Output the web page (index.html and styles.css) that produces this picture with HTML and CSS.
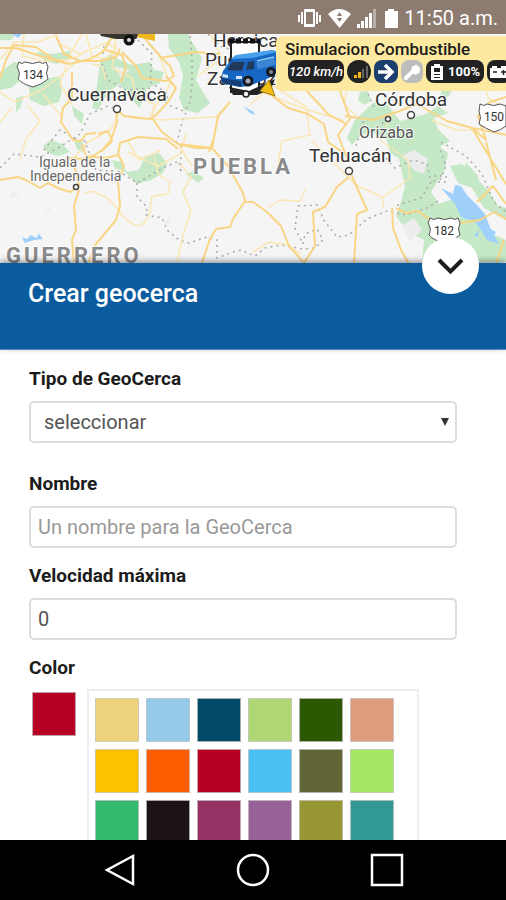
FILE: index.html
```html
<!DOCTYPE html>
<html lang="es">
<head>
<meta charset="utf-8">
<meta name="viewport" content="width=device-width, initial-scale=1">
<title>Crear geocerca</title>
<link rel="stylesheet" href="styles.css">
</head>
<body>
<header class="status">
  <svg class="status-icons" viewBox="0 0 104 24" aria-hidden="true">
    <g fill="#fff">
      <path fill-rule="evenodd" d="M8 3h9q1 0 1 1v16q0 1-1 1H8q-1 0-1-1V4q0-1 1-1zm1 3v12h7V6z"/>
      <path d="M4 6h2v12H4zM1 9h2v7H1zM19 6h2v12h-2zM22 9h2v7h-2z"/>
      <path d="M31 8Q42-2 54 8L42.500 22z"/>
      <path d="M60 18h3v4h-3zM64 15h3v7h-3zM68 11h3v11h-3zM72 7h3v15h-3z"/>
      <path d="M76 3h3v19h-3z" opacity=".4"/>
      <path d="M91 3h6v2h4v17H88V5h3z"/>
    </g>
    <path d="M40 10l2.500-4 2.500 4zM40 12h5l-2.500 4z" fill="#8d7b70"/>
  </svg>
  <time class="clock">11:50 a.m.</time>
</header>

<section class="map" aria-label="Mapa">
  <svg class="map-canvas" viewBox="0 34 506 229" preserveAspectRatio="xMinYMin slice">
    <rect y="34" width="900" height="229" fill="#f5f5f5"/>
    <g fill="#c5e8c7">
      <path d="M28 78l12 2 20-4 2 16-3 10-15 4-14-6z"/>
      <path d="M0 72l14-10 12 2-3 14-12 10-11 2z"/>
      <path d="M36 52l16 2 18-3 2 7-16 6-12-4z"/>
      <path d="M16 98l8-2-4 12-4 4z"/>
      <path d="M100 62l10-8 10 6 12 5 18-3 4 8 10 2-4 11-13 5-7 20-12-12-8-12-12 8-10 18-6-2 5-22z"/>
      <path d="M168 34h20l4 8 10 16-6 22 8 14 6 9-12 10-14-3-5-12 4-22-4-14-10-14z"/>
      <path d="M72 106l12 8-2 10-8-8z"/>
      <path d="M43 146l8-6 11 4 8 8-12 4-10-3z"/>
      <path d="M74 141l9 1v11l-6-4z"/>
      <path d="M112 160l9 2 6 10 12-2 6-14 14-3 8 10-4 10-12 7-14 4-14-14-8-1z"/>
      <path d="M186 174l8-3 10 7-6 5z"/>
      <path d="M360 92l8-1 3 10-7 4-6-5z"/>
      <path d="M374 102l14 3 12 16 26-7 12-8 10 7-14 5 4 11 12 12-10 6 8 6-4 20-14 12-14 4-10-8-2-20-14-8-4-15-14-6-12 4-8 9-5-7 8-18z"/>
      <path d="M395 140h42l4 36-10 16 8 12 14-5 6 10 14-2 8 16 14 12 11 5v22h-84l2-22-16-8-12-16 5-14 4-16z"/>
      <path d="M450 166l12-2 26 26 10 16 8 2v12l-22-12-12-20-14-5z"/>
      <path d="M466 162l12 14 2 12-16-16z"/>
      <path d="M442 87h12l-6 10-8 2z"/>
      <path d="M0 34h16l-5 6H0z"/>
    </g>
    <g fill="#ededed">
      <path d="M402 156l12-6 14 9-4 15-10-4zM163 222l8-4-3 9zM402 226l12-8 8 12-12 12zM44 218l8-15-2 8zM114 66l16 4-9 8zM12 190l8 5-10 3z"/>
    </g>
    <g fill="#9ed0fb">
      <path d="M441 188l12 6 2-9 6 1 6 9 9 9 9 10 6 16 8 14-12-4-6-10-6-8-14-5-6-13z"/>
      <path d="M22 237l5 2 4-4 5 3 3-4 4 5-9 1-9 3z"/>
      <path d="M244 107l9 4 2 4-5-2zM12 34h10l-4 4zM488 228l8 4-4 6z"/>
      <path d="M474 235l6-5-3 7z"/>
    </g>
    <g class="borders">
      <path d="M138 40l14 14-2 28 18 12-2 10 20 8-5 14-5 20M104 46l-2 18 6 16 18 10 26-2M208 34l12 12 12 4M190 36l2 22v30l-2 14-6 10M0 168l14-14 26 3 18-9 22-14 10-20 18-8 12 4M44 150l16-20 14 8 16 6M84 140l12 30 24 2 17 11 28-16 14-6 2 12v-30M137 183v14l10 10-1 8 16 3 5 12 12 10 10 3 18-6 10 3v18l16-6 8-2 14 6 10-8 16-3 22 4 12-1 8-8-6-11-12 5-2 10-8-16 3-22 20-1 5 14 14 18 12-2 18-16 20-8 20 4 22-8 12-8M386 158l9 10 18-8 14 4 4 18-10 16-26 8M441 142l25 14 16 18 12 28 12 10M368 94l6 13M356 146l8-26 16-2 12 22M434 176h12v6h-12zM440 180l6-14-6-16"/>
    </g>
    <g class="minor">
      <path d="M24 34l-2 22 22 5 28-2M0 92l14 10 28-12 22-17 10-10M28 106l12 15-14 18-6 20M43 94l20 24M60 44l20 10 28-12M82 34l-12 20-10 30 12 20M116 38l-4 30 20 10 4 18 18 8-2 16M120 112l-10 18-22 12-14 16M132 118l30 2 50-3 8 0M158 52l12 32-20 32M86 34l6 22 14 4 10-12M128 152l30 14 22-12 6-20M127 140l12 20 22-10M154 156l4 18 12 8-2 12-16 2-2 16q-4 13-12 14-12-4-18-14-12-16-20-17-8-6-16-2M180 164l12 14M191 176l-8 16 8 18-8 26-6 26M250 105l22-20 34 22 4 28-28 6-4 22M262 92l40 16 42 13M356 44l-12 60 12 12M394 110l-14 30 28 20 2 18-28 20 2 10M432 120l24 10 18 0M484 74l4 24 18 10M382 197l-26-12-44-44M268 208l12-8 20 1 6-12M253 252l16-10 20 3 12 10M178 144l14 22M118 48l-10-4-10 12"/>
      <path d="M0 60l14-18 24 0 20-8M0 122l12-14M210 34l12 24-24 18M92 64l10 2 4 14M82 54l-8 4"/>
    </g>
    <g class="roads">
      <path d="M0 78l6-18 8-15 22 2 20 14 14 3 20-5 14-8 6-11 14-8M0 48h16l24 8 24 6M56 36l8 18 16 7 20 0 16-4 4-8"/>
      <path d="M106 50l16 5 4 12-5 15M122 52l14 14 6 12 24 3 8-5-4-10-10-10-14-16-4-6M160 58l36-6 24 2M166 76l10 12-8 14-12 13-6 4-26-3-8-7 1 13-6 18-10 12M152 118l10 14 16 12 18 4 16 0 6-32 12-14M98 134l10-3 4 10-8 8-16 10-22-1M72 72v26l-9 10-2 14 12 18 8 1 5-7 10-1M0 180l18-3 10 4 12 7 8-5 10 5 12 4 9-6-4-18-10-8M79 190l-5 16 2 24-4 10 2 22M82 144l4 12 20 2 12-3 2-12 18-6 28 2 12 10M118 154l6 12-6 16 2 24-4 14-20 24-8 19M178 144l34 4 16 18 15 27 2 8-12 18-3 8-14 2-6 10-8 24M253 202l-8 0M213 140l-4 12M253 202l14 10 14 14 8 20 15 17 11-17-2-34 12-5 12-20 12-10M270 94l18 14 20 6 16 10 4 18 20 14M340 91l10 28-12 16 10 26M306 90l22 24 18 10M345 116l28 4 24-8 20-8 30 17 25 7 40 8M472 128l14 12-8-24 12-14 16-5M472 128l12 20 22 36M350 172l17 38-10 4-3 49M392 208l1 20 8 22 8 14M396 208l10 5 12-2 16 12 26 0 20-3 14-8 14 8 8-4M477 202l16-16 13 18M486 142l10 38M504 240l-8 24"/>
    </g>
    <g class="shield">
      <path d="M19 62q3 3 6 0 8 3 14 0 4 3 7 0l2 5q-3 6 0 12-5 5-15 8-11-3-15-8 3-6-1-12z"/>
      <path d="M480 104q4 3 7 0 7 3 13 0l6 2v20q-5 4-12 6-9-4-15-8 3-6 0-13z"/>
      <path d="M430 218q4 3 8 0 7 3 13 0 4 3 7 0l2 5q-3 6 0 12-5 5-16 8-11-3-15-8 3-6-1-12z"/>
    </g>
    <g class="places">
      <text x="33" y="79" class="route">134</text>
      <text x="494" y="121" class="route">150</text>
      <text x="444" y="235" class="route">182</text>
      <text x="67" y="101" class="city">Cuernavaca</text>
      <text x="375" y="106" class="city">Córdoba</text>
      <text x="309" y="162" class="city">Tehuacán</text>
      <text x="213" y="47" class="city">Heroica</text>
      <text x="205" y="66" class="city">Puebla</text>
      <text x="207" y="85" class="city">Zaragoza</text>
      <text x="359" y="138" class="town">Orizaba</text>
      <text x="39" y="167" class="village">Iguala de la</text>
      <text x="30" y="181" class="village">Independencia</text>
      <text x="193" y="174" class="state">PUEBLA</text>
      <text x="6" y="263" class="state">GUERRERO</text>
    </g>
    <g class="dots">
      <circle cx="117" cy="109" r="3.500"/><circle cx="411" cy="115" r="3.500"/><circle cx="349" cy="171" r="3.500"/>
      <circle cx="388" cy="119" r="2.500"/><circle cx="76" cy="187" r="2.500"/>
    </g>
    <g>
      <path d="M100 34h40l-4 5-20 0-15-3z" fill="#38352f"/>
      <path d="M138 34h17v7l-18-4z" fill="#efb81a"/>
      <circle cx="129" cy="40" r="5.500" fill="#111"/><circle cx="129" cy="40" r="2" fill="#ddd"/>
    </g>
    <g>
      <path d="M231 42h28v50h-28z" fill="#fff" stroke="#222" stroke-width="2"/>
      <path d="M229 41h31" stroke="#111" stroke-width="5" stroke-dasharray="5 2"/>
      <path d="M229 87l20 4 26-12-4 10-14 6h-24z" fill="#222"/>
      <circle cx="246" cy="94" r="3" fill="#eee" stroke="#222" stroke-width="1.500"/>
      <path d="M221 79l2-8 7-10 6-5 37-6 4 2v20l-8 6-20 8-10 1-17-4z" fill="#1667c4"/>
      <path d="M230 59l6-4 37-5 4 2-24 6z" fill="#4a9fea"/>
      <path d="M227 70l5-8 13 0-3 9zM246 70l2-8 6-1v8z" fill="#23395c"/>
      <path d="M257 66l18-5" stroke="#3c86d6" stroke-width="7"/>
      <path d="M257 61l17-4" stroke="#8fc6f5" stroke-width="1.500"/>
      <path d="M221 78l20 3 1 6-20-4z" fill="#174078"/>
      <path d="M223 74l5 1v3l-6-1zM236 76l6 0v3l-6 0z" fill="#d4e4f4"/>
      <circle cx="248" cy="81" r="5.500" fill="#171a22"/><circle cx="248" cy="81" r="2.500" fill="#a4abb7"/>
      <circle cx="271" cy="72" r="5" fill="#171a22"/><circle cx="271" cy="72" r="2" fill="#7d8797"/>
      <path d="M269 80l6 16-15-5z" fill="#f3bf16" stroke="#9a7a19"/>
    </g>
  </svg>

  <aside class="unit">
    <strong class="unit-name">Simulacion Combustible</strong>
    <div class="badges">
      <span class="badge badge-speed">120 km/h</span>
      <span class="badge badge-signal"><svg viewBox="0 0 24 22" aria-hidden="true"><path d="M7 14h3v3H7zM11 11h3v6h-3z" fill="#f0b81c"/><path d="M15 8h2v9h-2zM19 5h2v12h-2z" fill="#686868"/></svg></span>
      <span class="badge badge-heading"><svg viewBox="0 0 24 22" aria-hidden="true"><path d="M4 11h14M11 4l7 7-7 7" fill="none" stroke="#fff" stroke-width="3.500"/></svg></span>
      <span class="badge badge-key"><svg viewBox="0 0 24 22" aria-hidden="true"><path d="M12 5l5-2 4 4-1 5-4 2-3-1-7 7-3-1 1-3 7-7z" fill="#fff"/></svg></span>
      <span class="badge badge-battery"><svg viewBox="0 0 14 22" aria-hidden="true"><path fill-rule="evenodd" d="M4 3h6v2h3v14H1V5h3zm0 4v4h6V7z" fill="#fff"/><path d="M4 13h6v1H4zM4 16h6v1H4z" fill="#222"/></svg>100%</span>
      <span class="badge badge-power"><svg viewBox="0 0 24 22" aria-hidden="true"><path d="M5 5h5v2h4V5h5v2h2v10H3V7h2z" fill="#fff"/><path d="M6 11h4M14 11h5M16.500 9v5" stroke="#222" stroke-width="1.500"/></svg></span>
    </div>
  </aside>
</section>

<section class="title-bar">
  <h1>Crear geocerca</h1>
  <button class="collapse" type="button" aria-label="Ocultar">
    <svg viewBox="0 0 57 57" aria-hidden="true"><path d="M17 23l11.500 11.500L40 23" fill="none" stroke="#1d1d1d" stroke-width="4"/></svg>
  </button>
</section>

<main class="panel">
  <form class="form">
    <div class="field field-type">
      <label for="type">Tipo de GeoCerca</label>
      <div class="select-box">
        <select id="type"><option>seleccionar</option></select>
        <svg class="caret" viewBox="0 0 8 8" aria-hidden="true"><path d="M0 0h8L4 8z" fill="#333"/></svg>
      </div>
    </div>
    <div class="field">
      <label for="name">Nombre</label>
      <input id="name" type="text" placeholder="Un nombre para la GeoCerca">
    </div>
    <div class="field">
      <label for="speed">Velocidad máxima</label>
      <input id="speed" type="text" inputmode="numeric" value="0">
    </div>
    <div class="field field-color">
      <span class="label" id="color-label">Color</span>
      <div class="picker" role="group" aria-labelledby="color-label">
        <button class="swatch crimson" type="button" aria-label="Color actual"></button>
        <div class="palette">
          <button class="swatch sand" type="button" aria-label="Arena"></button>
          <button class="swatch sky" type="button" aria-label="Celeste"></button>
          <button class="swatch navy" type="button" aria-label="Azul marino"></button>
          <button class="swatch pistachio" type="button" aria-label="Pistacho"></button>
          <button class="swatch forest" type="button" aria-label="Verde bosque"></button>
          <button class="swatch salmon" type="button" aria-label="Salmón"></button>
          <button class="swatch amber" type="button" aria-label="Ámbar"></button>
          <button class="swatch orange" type="button" aria-label="Naranja"></button>
          <button class="swatch crimson" type="button" aria-label="Carmesí"></button>
          <button class="swatch azure" type="button" aria-label="Azul claro"></button>
          <button class="swatch olive" type="button" aria-label="Oliva"></button>
          <button class="swatch lime" type="button" aria-label="Lima"></button>
          <button class="swatch green" type="button" aria-label="Verde"></button>
          <button class="swatch black" type="button" aria-label="Negro"></button>
          <button class="swatch plum" type="button" aria-label="Ciruela"></button>
          <button class="swatch mauve" type="button" aria-label="Malva"></button>
          <button class="swatch moss" type="button" aria-label="Musgo"></button>
          <button class="swatch teal" type="button" aria-label="Turquesa"></button>
        </div>
      </div>
    </div>
  </form>
</main>

<nav class="system-nav" aria-label="Sistema">
  <button type="button" aria-label="Atrás"><svg viewBox="0 0 36 36" aria-hidden="true"><path d="M32 4v28L6 18z"/></svg></button>
  <button type="button" aria-label="Inicio"><svg viewBox="0 0 36 36" aria-hidden="true"><circle cx="18" cy="18" r="15"/></svg></button>
  <button type="button" aria-label="Recientes"><svg viewBox="0 0 36 36" aria-hidden="true"><path d="M3 3h30v30H3z"/></svg></button>
</nav>
</body>
</html>
```
FILE: styles.css
```css
* { box-sizing: border-box; }

body {
  margin: 0;
  height: 100vh;
  display: flex;
  flex-direction: column;
  overflow: hidden;
  background: #fff;
  color: #1c1c1c;
  font-family: Roboto, "Liberation Sans", sans-serif;
}

button, input, select { font: inherit; }
button { padding: 0; border: 0; background: none; }

.status {
  flex: none;
  height: 34px;
  padding: 2px 8px 0 0;
  display: flex;
  align-items: center;
  justify-content: flex-end;
  gap: 3px;
  background: #8d7b70;
  color: #fff;
}
.status-icons { width: 104px; height: 24px; }
.clock { font-size: 20px; line-height: 24px; }

.map {
  flex: none;
  position: relative;
  height: 229px;
  overflow: hidden;
  background: #f5f5f5;
}
.map-canvas { display: block; width: 100%; height: 100%; }
.borders { fill: none; stroke: #aaa; stroke-width: 1.5px; stroke-dasharray: 2 4; }
.minor { fill: none; stroke: #fae7b3; stroke-width: 1.5px; stroke-linejoin: round; }
.roads { fill: none; stroke: #f9d584; stroke-width: 2px; stroke-linejoin: round; }
.shield { fill: #fff; stroke: #555; stroke-width: 1px; }
.places { fill: #333; stroke: #fff; stroke-width: 2px; stroke-opacity: 0.8; paint-order: stroke; }
.route { font-size: 12px; text-anchor: middle; }
.city { font-size: 19px; }
.town { font-size: 16px; fill: #555; }
.village { font-size: 14px; fill: #666; }
.state { font-size: 22px; font-weight: 700; letter-spacing: 3px; fill: #8a8a8a; }
.dots { fill: #fff; stroke: #444; stroke-width: 1.5px; }

.unit {
  position: absolute;
  top: 2px;
  right: 0;
  width: 230px;
  height: 55px;
  padding: 3px 0 0 9px;
  border-radius: 6px 0 0 6px;
  background: #fde99f;
  overflow: hidden;
}
.unit-name {
  display: block;
  font-size: 17px;
  line-height: 20px;
  font-weight: 500;
  white-space: nowrap;
}
.badges { display: flex; gap: 3px; margin-top: 1px; padding-left: 3px; }
.badge {
  flex: none;
  width: 24px;
  height: 23px;
  display: flex;
  align-items: center;
  justify-content: center;
  border-radius: 8px;
  background: #222;
  color: #fff;
  font-size: 13px;
  font-weight: 700;
}
.badge svg { width: 24px; height: 22px; }
.badge-speed { width: 56px; font-style: italic; font-weight: 500; }
.badge-signal { border-radius: 12px; }
.badge-heading { background: #1c3e6e; }
.badge-key { width: 22px; background: #bdbdbd; }
.badge-battery { width: 58px; gap: 4px; }
.badge-battery svg { width: 14px; }

.title-bar {
  flex: none;
  position: relative;
  height: 87px;
  padding: 16px 28px;
  background: #0b5c9f;
  border-bottom: 1px solid #5a88c0;
  box-shadow: 0 -2px 6px rgba(0, 0, 0, 0.4);
  color: #fff;
}
.title-bar h1 { margin: 0; font-size: 25px; line-height: 30px; font-weight: 500; }
.collapse {
  position: absolute;
  top: -26px;
  right: 27px;
  width: 57px;
  height: 57px;
  border-radius: 50%;
  background: #fff;
}
.collapse svg { display: block; width: 100%; }

.panel { flex: 1; min-height: 0; overflow: hidden; }
.form {
  display: flex;
  flex-direction: column;
  gap: 16px;
  padding: 17px 49px 0 29px;
}
.field { display: flex; flex-direction: column; gap: 10px; }
.field-type { margin-bottom: 13px; }
.field-color { gap: 9px; }
.field label, .label { font-size: 19px; line-height: 24px; font-weight: 700; }
.field input, .field select {
  width: 100%;
  height: 42px;
  padding: 0 7px;
  border: 2px solid #dcdcdc;
  border-radius: 5px;
  background: #fff;
  color: #555;
  font-size: 20px;
  outline: none;
}
.field select { appearance: none; padding-left: 13px; }
.field input::placeholder { color: #999; opacity: 1; }
.select-box { position: relative; }
.caret { position: absolute; top: 17px; right: 8px; width: 8px; height: 8px; pointer-events: none; }

.picker { display: flex; align-items: flex-start; gap: 11px; }
.picker > .swatch { margin: 3px 0 0 3px; }
.palette {
  width: 332px;
  padding: 7px 6px;
  display: grid;
  grid-template-columns: repeat(6, 44px);
  gap: 7px;
  border: 2px solid #eee;
}
.swatch { width: 44px; height: 44px; border: 1px solid rgba(200, 200, 200, 0.8); }
.crimson { background-color: #b50024; }
.sand { background-color: #edd17b; }
.sky { background-color: #95cae9; }
.navy { background-color: #004967; }
.pistachio { background-color: #afd875; }
.forest { background-color: #2b5800; }
.salmon { background-color: #de9c7e; }
.amber { background-color: #ffc200; }
.orange { background-color: #ff5e00; }
.azure { background-color: #4abff3; }
.olive { background-color: #626637; }
.lime { background-color: #a4e766; }
.green { background-color: #33b96e; }
.black { background-color: #1d1213; }
.plum { background-color: #963164; }
.mauve { background-color: #986298; }
.moss { background-color: #969733; }
.teal { background-color: #329896; }

.system-nav {
  flex: none;
  height: 60px;
  padding: 0 101px;
  display: flex;
  align-items: center;
  justify-content: space-between;
  background: #000;
}
.system-nav button { width: 36px; height: 36px; }
.system-nav svg { display: block; fill: none; stroke: #fff; stroke-width: 2.5px; }
```
